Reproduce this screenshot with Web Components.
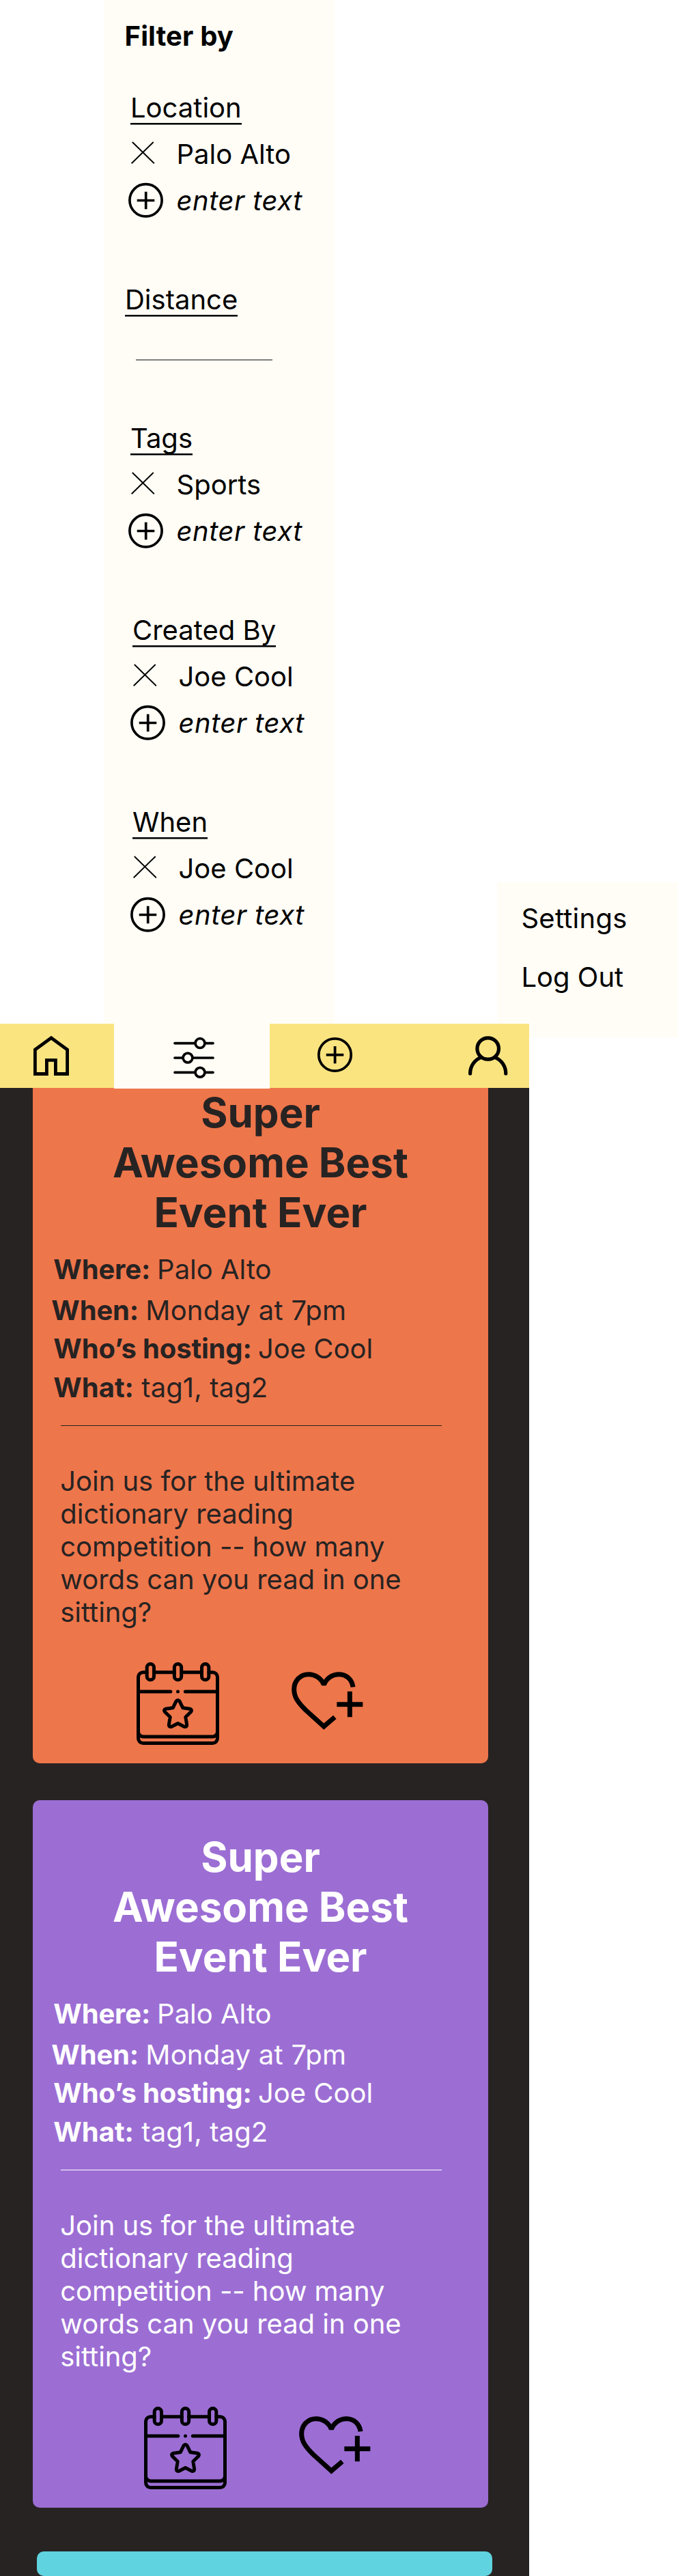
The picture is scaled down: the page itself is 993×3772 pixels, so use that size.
<!DOCTYPE html>
<html lang="en">
<head>
<meta charset="utf-8">
<title>Events</title>
<style>
  body { margin: 0; background: #fff; color: #000; font: 400 40px/48px Inter, "Liberation Sans", sans-serif; }
</style>
</head>
<body>
<event-app></event-app>
<script>
const define = (name, html) => {
  const template = document.createElement('template');
  template.innerHTML = html;
  customElements.define(name, class extends HTMLElement {
    constructor() {
      super();
      this.attachShadow({ mode: 'open' }).append(template.content.cloneNode(true));
    }
  });
};

define('icon-remove', `
  <style>:host{display:block;width:67.5px;height:48px} svg{display:block;overflow:visible}</style>
  <svg width="67" height="48" fill="none" stroke="#000" stroke-width="1.9"><path d="M2.8 6L34.8 37.2M33.7 6L1.7 37.2"/></svg>`);

define('icon-add', `
  <style>:host{display:block;width:67.5px;height:48px} svg{display:block;overflow:visible}</style>
  <svg width="67" height="48" fill="none" stroke="#000" stroke-width="3.7"><circle cx="22.5" cy="23.3" r="23.6"/><path d="M9.7 23.5H35.3M22.7 10.7V36.3"/></svg>`);

define('icon-calendar', `
  <style>:host{display:block;width:121px;height:121px} svg{display:block}</style>
  <svg width="121" height="121" viewBox="0 0 363 363" fill="none" stroke="#000" stroke-width="15" stroke-linecap="round" stroke-linejoin="round">
    <rect x="45.5" y="7.5" width="31" height="70" rx="15.5"/><rect x="166" y="7.5" width="31" height="70" rx="15.5"/><rect x="286.5" y="7.5" width="31" height="70" rx="15.5"/>
    <path d="M45 44H29A21.5 21.5 0 0 0 7.5 65.5V334A21.5 21.5 0 0 0 29 355.5H334A21.5 21.5 0 0 0 355.5 334V65.5A21.5 21.5 0 0 0 334 44H318M77 44H166M197 44H286"/>
    <path d="M7.5 129H149.5M214 129H355.5M7.5 305A22 22 0 0 0 29 327H334A22 22 0 0 0 355.5 305"/>
    <circle cx="181.5" cy="129" r="7.5" fill="#000" stroke="none"/>
    <path d="M160 200L173.5 172Q181.5 161 189.5 172L203 200L234 204.5Q246 208 238.5 218.5L215.5 241L221 275Q220 286 209 283L181.5 268.5L154 283Q143 286 142 275L147.5 241L124.5 218.5Q117 208 129 204.5Z"/>
  </svg>`);

define('icon-like', `
  <style>:host{display:block;width:105px;height:85px} svg{display:block;overflow:visible}</style>
  <svg width="105" height="85" viewBox="0 0 315 255" fill="none" stroke="#000" stroke-width="21" stroke-miterlimit="2">
    <path d="M190 199L142 240L62 168C28 135 11 110 11 77C11 40 38 11 75 11C103 11 130 28 142 57C154 28 180 11 208 11C242 11 266 35 270 67M199 143H313M256 86V199"/>
  </svg>`);

define('filter-group', `
  <style>
    :host{display:flex;flex-direction:column;align-items:flex-start;gap:20px;margin-left:var(--inset,39px)}
    .title{background:linear-gradient(#000 0 2px,#777 2px 3px) 0 100%/100% 3px no-repeat;padding-bottom:1px;margin-bottom:-1px}
  </style>
  <div class="title"><slot name="title"></slot></div><slot></slot>`);

define('filter-row', `
  <style>:host{display:flex;white-space:nowrap} :host([hint]){font-style:italic;letter-spacing:.5px}</style>
  <slot name="icon"></slot><span><slot></slot></span>`);

define('filter-panel', `
  <style>
    :host{display:flex;flex-direction:column;box-sizing:border-box;width:338px;height:1499px;padding-top:29px;background:#fffdf6}
    h2{margin:0 0 57px 30.5px;font-size:40px;font-weight:700;line-height:48px;letter-spacing:.15px}
    .slider{height:1.5px;width:200px;margin:63px 0 90.5px 47px;background:#807f7b}
    .space{height:97px}
  </style>
  <h2>Filter by</h2>
  <filter-group><span slot="title">Location</span><filter-row><icon-remove slot="icon"></icon-remove>Palo Alto</filter-row><filter-row hint><icon-add slot="icon"></icon-add>enter text</filter-row></filter-group>
  <div class="space"></div>
  <filter-group style="--inset:31px"><span slot="title">Distance</span></filter-group>
  <div class="slider"></div>
  <filter-group><span slot="title">Tags</span><filter-row><icon-remove slot="icon"></icon-remove>Sports</filter-row><filter-row hint><icon-add slot="icon"></icon-add>enter text</filter-row></filter-group>
  <div class="space"></div>
  <filter-group style="--inset:42px"><span slot="title">Created By</span><filter-row><icon-remove slot="icon"></icon-remove>Joe Cool</filter-row><filter-row hint><icon-add slot="icon"></icon-add>enter text</filter-row></filter-group>
  <div class="space"></div>
  <filter-group style="--inset:42px"><span slot="title">When</span><filter-row><icon-remove slot="icon"></icon-remove>Joe Cool</filter-row><filter-row hint><icon-add slot="icon"></icon-add>enter text</filter-row></filter-group>`);

define('account-menu', `
  <style>
    :host{display:flex;flex-direction:column;gap:38px;box-sizing:border-box;width:264.6px;height:227px;padding:29px 0 0 35px;background:#fffdf6}
    div:first-of-type{letter-spacing:.25px}
  </style>
  <div>Settings</div><div>Log Out</div>`);

define('nav-bar', `
  <style>
    :host{display:flex;position:relative;z-index:1;width:775px;height:94px;background:#fae480}
    .home{width:167px}.filters{width:228px;height:95px;background:#fffdf6}.add{width:190px}.account{width:190px}
    svg{display:block}
  </style>
  <div class="home"><svg width="167" height="94" fill="none" stroke="#000" stroke-width="4.8"><path d="M51.4 38L75 20.8L98.6 38V73.5H81.4V53.4H68.4V73.5H51.4Z"/></svg></div>
  <div class="filters"><svg width="228" height="94" fill="none" stroke="#000" stroke-width="3.7" stroke-linecap="round"><path d="M89 28.6H119M133 28.6H145M89 50H101M115 50H145M89 71.3H119M133 71.3H145"/><circle cx="126" cy="28.6" r="6.9"/><circle cx="108" cy="50" r="6.9"/><circle cx="126" cy="71.3" r="6.9"/></svg></div>
  <div class="add"><svg width="190" height="94" fill="none" stroke="#000" stroke-width="3.8"><circle cx="95.5" cy="45.5" r="23.7"/><path d="M82.7 45.7H108.3M95.6 33V58.3"/></svg></div>
  <div class="account"><svg width="190" height="94" fill="none" stroke="#000" stroke-width="5.2" stroke-linecap="round"><ellipse cx="129.7" cy="36.5" rx="15.8" ry="15.7"/><path d="M103.6 73C103.6 62 110 53 119.5 49.3M155.8 73C155.8 62 149.4 53 139.9 49.3"/></svg></div>`);

define('event-card', `
  <style>
    :host{display:flex;flex:none;flex-direction:column;box-sizing:border-box;width:667px;height:1036px;padding-top:47px;border-radius:10px;background:var(--card);color:var(--ink)}
    h1{margin:0;text-align:center;font-size:60px;line-height:73px;font-weight:700}
    .fact{margin-left:30.3px;white-space:nowrap}
    .fact b{font-weight:700;letter-spacing:-.15px;margin-right:-1.3px}
    .where{margin-top:23px}.when{margin:12px 0 8px 27.3px;letter-spacing:.25px}.who b{margin-right:-2px}.what{margin-top:9px;letter-spacing:.1px}
    .what b{letter-spacing:0;margin-right:0}
    hr{width:558px;height:1px;border:0;margin:31px 0 57px 41px;background:var(--ink)}
    p{width:520px;margin:0 0 0 40.3px;letter-spacing:-.04px}
    .actions{display:flex;align-items:flex-start;gap:106.3px;margin:49px 0 0 var(--actions,152px)}
    icon-like{margin-top:13.7px}
  </style>
  <h1>Super<br>Awesome Best<br>Event Ever</h1>
  <div class="fact where"><b>Where:</b> Palo Alto</div>
  <div class="fact when"><b>When:</b> Monday at 7pm</div>
  <div class="fact who"><b>Who’s hosting:</b> Joe Cool</div>
  <div class="fact what"><b>What:</b> tag1, tag2</div>
  <hr>
  <p>Join us for the ultimate dictionary reading competition -- how many words can you read in one sitting?</p>
  <div class="actions"><icon-calendar></icon-calendar><icon-like></icon-like></div>`);

define('event-feed', `
  <style>
    :host{display:flex;flex-direction:column;gap:54px;box-sizing:border-box;width:775px;height:2179px;padding-left:48px;background:#272322}
    event-card:first-of-type{margin-top:-47px}
    .next{flex:none;width:667px;height:36px;margin:10px 0 0 6px;border-radius:10px;background:#60d3e0}
  </style>
  <event-card style="--card:#ee764b;--ink:#272322"></event-card>
  <event-card style="--card:#9c6ed4;--ink:#fff;--actions:163px"></event-card>
  <div class="next"></div>`);

define('event-app', `
  <style>
    :host{display:block;width:993px;height:3772px;overflow:hidden}
    .panels{display:flex;justify-content:space-between;align-items:flex-end;height:1499px;padding-left:152px}
    account-menu{margin-bottom:-20px}
  </style>
  <div class="panels"><filter-panel></filter-panel><account-menu></account-menu></div>
  <nav-bar></nav-bar>
  <event-feed></event-feed>`);
</script>
</body>
</html>
